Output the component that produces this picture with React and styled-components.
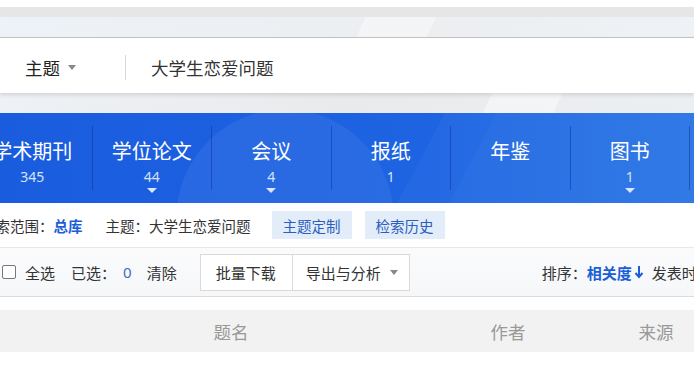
import React from 'react'
import styled, { createGlobalStyle } from 'styled-components'

const GlobalStyle = createGlobalStyle`
  body {
    margin: 0;
    background: #fff;
    overflow: hidden;
    font-family: "Noto Sans", "Noto Sans CJK SC", sans-serif;
  }
`

const Page = styled.div`
  width: 694px;
  height: 367px;
  overflow: hidden;
  background: #fff;
`

const TopBand = styled.div`
  margin-top: 7px;
  height: 10px;
  background: #e6e6e6;
`

const TopDeco = styled.div`
  height: 20px;
  background:
    linear-gradient(115deg, transparent 0 52%, rgba(255,255,255,0.4) 52% 62%, transparent 62%),
    linear-gradient(90deg, #edf2f8, #eceef0 60%, #eef2f6);
  border-bottom: 1px solid #c4c4c4;
`

const SearchBox = styled.div`
  position: relative;
  z-index: 1;
  height: 55px;
  background: #fff;
  display: flex;
  align-items: center;
  padding-top: 3px;
  box-sizing: border-box;
  box-shadow: 0 2px 4px rgba(0, 0, 0, 0.12);
`

const FieldSelect = styled.div`
  display: flex;
  align-items: center;
  gap: 8px;
  margin-left: 25px;
  width: 100px;
  font-size: 17.5px;
  color: #222;
`

const Caret = styled.span`
  width: 0;
  height: 0;
  border-left: 4px solid transparent;
  border-right: 4px solid transparent;
  border-top: 5px solid #888;
`

const Divider = styled.span`
  width: 1px;
  height: 25px;
  background: #d8d8d8;
  margin-right: 25px;
`

const Query = styled.div`
  font-size: 17.5px;
  color: #333;
`

const GapBand = styled.div`
  height: 20px;
  background:
    linear-gradient(115deg, transparent 0 70%, rgba(255,255,255,0.45) 70% 80%, transparent 80%),
    linear-gradient(90deg, #eef1f5, #e9eaec 50%, #eceff2);
`

const TabBand = styled.div`
  height: 90px;
  display: flex;
  align-items: center;
  background:
    radial-gradient(circle at 285px 105px, rgba(255,255,255,0.06) 0 108px, transparent 109px),
    linear-gradient(118deg, transparent 0 60%, rgba(255,255,255,0.03) 60% 67%, rgba(255,255,255,0.05) 67%),
    linear-gradient(90deg, #1a5cde, #1d63e2 60%, #2673e5);
  overflow: hidden;
`

const Tabs = styled.div`
  display: flex;
  margin-left: -27px;
  height: 64px;
`

const Tab = styled.div`
  flex: 0 0 118.5px;
  display: flex;
  flex-direction: column;
  align-items: center;
  border-right: 1px solid rgba(10, 50, 160, 0.5);
  color: #fff;
  position: relative;
`

const TabLabel = styled.div`
  font-size: 20px;
  line-height: 24px;
  margin-top: 14px;
`

const TabCount = styled.div`
  font-size: 14px;
  line-height: 20px;
  margin-top: 3px;
  color: #d6e2f8;
`

const TabArrow = styled.span`
  position: absolute;
  top: 62px;
  width: 0;
  height: 0;
  border-left: 5px solid transparent;
  border-right: 5px solid transparent;
  border-top: 5px solid #dbe6fa;
`

const FilterRow = styled.div`
  height: 44px;
  display: flex;
  align-items: center;
  margin-left: -19px;
  font-size: 14.5px;
  color: #333;
  white-space: nowrap;
`

const Strong = styled.b`
  color: #1a5fd6;
  font-weight: 700;
`

const FilterText = styled.span`
  margin-left: ${p => p.gap || 0}px;
`

const TagButton = styled.span`
  margin-left: ${p => p.gap}px;
  height: 28px;
  padding: 0 11px;
  display: flex;
  align-items: center;
  background: #e3ecf9;
  color: #2a5fbf;
`

const Toolbar = styled.div`
  height: 50px;
  box-sizing: border-box;
  border-top: 1px solid #e8e8e8;
  border-bottom: 1px solid #dcdcdc;
  background: linear-gradient(180deg, #fbfbfc, #f5f7f9);
  display: flex;
  align-items: center;
  font-size: 15px;
  color: #333;
  white-space: nowrap;
  overflow: hidden;
`

const Checkbox = styled.span`
  flex: 0 0 auto;
  display: inline-block;
  box-sizing: border-box;
  margin-left: 2px;
  width: 14px;
  height: 14px;
  border: 1px solid #777;
  border-radius: 2px;
  background: #fff;
`

const Item = styled.span`
  flex: 0 0 auto;
  margin-left: ${p => p.gap}px;
  color: ${p => p.blue ? '#3a6cc6' : '#333'};
`

const BtnGroup = styled.div`
  flex: 0 0 auto;
  margin-left: 23px;
  display: flex;
  height: 35px;
  border: 1px solid #d9d9d9;
  background: #fff;
`

const Btn = styled.span`
  display: flex;
  align-items: center;
  gap: 9px;
  padding: 0 ${p => p.pr || 16}px 0 ${p => p.pl || 15}px;
  border-left: ${p => p.first ? 'none' : '1px solid #d9d9d9'};
`

const Sort = styled.div`
  flex: 0 0 auto;
  margin-left: 132px;
  display: flex;
  align-items: center;
`

const SortActive = styled.b`
  color: #1a5fd6;
  font-weight: 700;
  display: flex;
  align-items: center;
  gap: 2px;
`

const Spacer = styled.div`
  height: 13px;
`

const HeaderRow = styled.div`
  height: 42px;
  background: #f2f2f2;
  display: grid;
  grid-template-columns: 462px 92px 204px;
  align-items: center;
  font-size: 17.5px;
  color: #999;
`

const HeaderCell = styled.div`
  text-align: center;
`

const tabs = [
  { label: '学术期刊', count: '345' },
  { label: '学位论文', count: '44', arrow: true },
  { label: '会议', count: '4', arrow: true },
  { label: '报纸', count: '1' },
  { label: '年鉴' },
  { label: '图书', count: '1', arrow: true },
]

const App = () => {
  return (
    <Page>
      <GlobalStyle />
      <TopBand />
      <TopDeco />
      <SearchBox>
        <FieldSelect>
          主题
          <Caret />
        </FieldSelect>
        <Divider />
        <Query>大学生恋爱问题</Query>
      </SearchBox>
      <GapBand />
      <TabBand>
        <Tabs>
          {tabs.map(t => (
            <Tab key={t.label}>
              <TabLabel>{t.label}</TabLabel>
              {t.count && <TabCount>{t.count}</TabCount>}
              {t.arrow && <TabArrow />}
            </Tab>
          ))}
        </Tabs>
      </TabBand>
      <FilterRow>
        <FilterText>检索范围：<Strong>总库</Strong></FilterText>
        <FilterText gap={23}>主题：大学生恋爱问题</FilterText>
        <TagButton gap={21}>主题定制</TagButton>
        <TagButton gap={13}>检索历史</TagButton>
      </FilterRow>
      <Toolbar>
        <Checkbox />
        <Item gap={9}>全选</Item>
        <Item gap={16}>已选：</Item>
        <Item gap={7} blue>0</Item>
        <Item gap={15}>清除</Item>
        <BtnGroup>
          <Btn first>批量下载</Btn>
          <Btn pl={13} pr={11}>
            导出与分析
            <Caret />
          </Btn>
        </BtnGroup>
        <Sort>
          排序：
          <SortActive>
            相关度
            <svg width="10" height="14" viewBox="0 0 10 14">
              <path d="M5 1v10M1.5 8L5 12l3.5-4" stroke="#1a5fd6" strokeWidth="2" fill="none" />
            </svg>
          </SortActive>
          <Item gap={8}>发表时间</Item>
        </Sort>
      </Toolbar>
      <Spacer />
      <HeaderRow>
        <HeaderCell>题名</HeaderCell>
        <HeaderCell>作者</HeaderCell>
        <HeaderCell>来源</HeaderCell>
      </HeaderRow>
    </Page>
  )
}

export default App
